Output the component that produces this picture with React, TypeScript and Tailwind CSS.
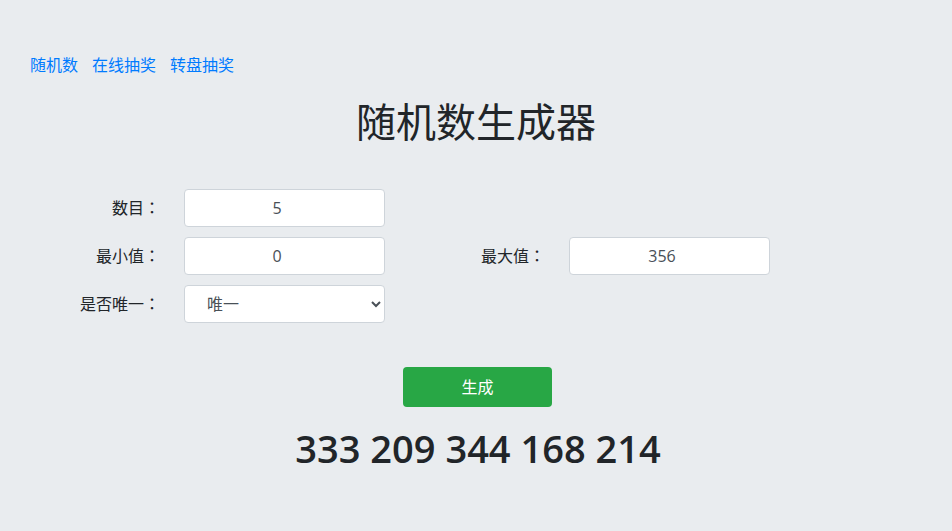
const font = { fontFamily: '"Open Sans", "Noto Sans CJK SC", sans-serif' };
const labelFont = { fontFamily: '"Open Sans", "Noto Sans CJK JP", sans-serif' };

const Field = ({ label, value }: { label: string; value: string }) => (
  <div className="flex w-[385px] items-center">
    <label className="w-[160px] text-right text-base leading-6 text-[#212529]" style={labelFont}>
      {label}
    </label>
    <input
      readOnly
      type="number"
      value={value}
      className="ml-[24px] h-[38px] w-[201px] rounded border border-[#ced4da] bg-white text-center text-base text-[#495057] outline-none"
    />
  </div>
);

export default function App() {
  return (
    <div className="min-h-[531px] w-full bg-[#e9ecef]" style={font}>
      <nav className="flex gap-[14px] pl-[30px] pt-[53px] text-base leading-6 text-[#007bff]">
        <a href="#">随机数</a>
        <a href="#">在线抽奖</a>
        <a href="#">转盘抽奖</a>
      </nav>

      <h1 className="mt-[15px] text-center text-[40px] font-normal leading-[60px] text-[#212529]">随机数生成器</h1>

      <div className="mt-[37px] flex flex-col gap-[10px]">
        <Field label="数目：" value="5" />
        <div className="flex">
          <Field label="最小值：" value="0" />
          <Field label="最大值：" value="356" />
        </div>
        <div className="flex w-[385px] items-center">
          <label className="w-[160px] text-right text-base leading-6 text-[#212529]" style={labelFont}>
            是否唯一：
          </label>
          <select
            defaultValue="1"
            className="ml-[24px] h-[38px] w-[201px] rounded border border-[#ced4da] bg-white pl-[18px] pr-2 text-base text-[#495057] outline-none"
          >
            <option value="1">唯一</option>
            <option value="0">不唯一</option>
          </select>
        </div>
      </div>

      <div className="mt-[44px] flex justify-center">
        <button className="ml-[3px] h-[40px] w-[149px] rounded bg-[#28a745] text-base text-white">生成</button>
      </div>

      <div className="ml-[4px] mt-[13px] text-center text-[38px] font-semibold leading-[56px] text-[#212529]">
        333 209 344 168 214
      </div>
    </div>
  );
}
